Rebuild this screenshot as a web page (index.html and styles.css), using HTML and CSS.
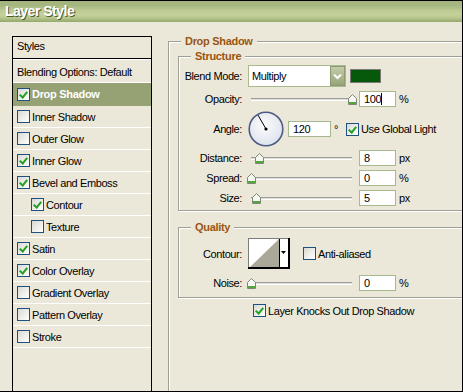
FILE: index.html
```html
<!DOCTYPE html>
<html lang="en">
<head>
  <meta charset="UTF-8" />
  <title>Layer Style</title>
  <link rel="stylesheet" href="styles.css">
</head>
<body>
  <div class="window">
    <div class="titlebar">Layer Style</div>
    <div class="window-body">

      <div class="styles-panel">
        <div class="panel-head">Styles</div>
        <div class="style-item blending">Blending Options: Default</div>
        <div class="style-item selected"><span class="check on"></span>Drop Shadow</div>
        <div class="style-item"><span class="check"></span>Inner Shadow</div>
        <div class="style-item"><span class="check"></span>Outer Glow</div>
        <div class="style-item"><span class="check on"></span>Inner Glow</div>
        <div class="style-item"><span class="check on"></span>Bevel and Emboss</div>
        <div class="style-item sub"><span class="check on"></span>Contour</div>
        <div class="style-item sub"><span class="check"></span>Texture</div>
        <div class="style-item"><span class="check on"></span>Satin</div>
        <div class="style-item"><span class="check on"></span>Color Overlay</div>
        <div class="style-item"><span class="check"></span>Gradient Overlay</div>
        <div class="style-item"><span class="check"></span>Pattern Overlay</div>
        <div class="style-item"><span class="check"></span>Stroke</div>
      </div>

      <div class="settings">
        <fieldset class="group">
          <legend>Drop Shadow</legend>

          <fieldset class="subgroup structure">
            <legend>Structure</legend>

            <div class="row row-blend">
              <span class="label">Blend Mode:</span>
              <div class="select">
                <span>Multiply</span>
                <span class="select-btn">
                  <svg width="13" height="18" viewBox="0 0 13 18"><path d="M3 7.5l3.5 3.5 3.5-3.5" fill="none" stroke="#fff" stroke-width="2"/></svg>
                </span>
              </div>
              <span class="swatch"></span>
            </div>

            <div class="row">
              <span class="label">Opacity:</span>
              <div class="slider"><div class="rail"><span class="thumb" style="left: 100%"><svg width="9" height="11" viewBox="0 0 9 11"><path d="M0.5 4.5L4.5 0.5 8.5 4.5V10.5H0.5Z" fill="#f6f6f2" stroke="#7d8775"/><rect x="1" y="8" width="7" height="2" fill="#52a63c"/></svg></span></div></div>
              <span class="field">100<i class="caret"></i></span>
              <span class="unit">%</span>
            </div>

            <div class="row row-angle">
              <span class="label">Angle:</span>
              <svg class="dial" width="36" height="36" viewBox="0 0 36 36">
                <defs>
                  <radialGradient id="dialFill" cx="45%" cy="40%" r="60%">
                    <stop offset="0" stop-color="#fdfdfd"/>
                    <stop offset="1" stop-color="#dde2ec"/>
                  </radialGradient>
                </defs>
                <circle cx="18" cy="18" r="16.8" fill="url(#dialFill)" stroke="#4e5d86" stroke-width="1.6"/>
                <line x1="18" y1="18" x2="10" y2="4.1" stroke="#000" stroke-width="1"/>
                <circle cx="18" cy="18" r="1.6" fill="#000"/>
              </svg>
              <span class="field field-wide">120</span>
              <span class="unit degree">°</span>
              <span class="check-label"><span class="check on"></span>Use Global Light</span>
            </div>

            <div class="row">
              <span class="label">Distance:</span>
              <div class="slider"><div class="rail"><span class="thumb" style="left: 8%"><svg width="9" height="11" viewBox="0 0 9 11"><path d="M0.5 4.5L4.5 0.5 8.5 4.5V10.5H0.5Z" fill="#f6f6f2" stroke="#7d8775"/><rect x="1" y="8" width="7" height="2" fill="#52a63c"/></svg></span></div></div>
              <span class="field">8</span>
              <span class="unit">px</span>
            </div>

            <div class="row">
              <span class="label">Spread:</span>
              <div class="slider"><div class="rail"><span class="thumb" style="left: 0%"><svg width="9" height="11" viewBox="0 0 9 11"><path d="M0.5 4.5L4.5 0.5 8.5 4.5V10.5H0.5Z" fill="#f6f6f2" stroke="#7d8775"/><rect x="1" y="8" width="7" height="2" fill="#52a63c"/></svg></span></div></div>
              <span class="field">0</span>
              <span class="unit">%</span>
            </div>

            <div class="row">
              <span class="label">Size:</span>
              <div class="slider"><div class="rail"><span class="thumb" style="left: 5%"><svg width="9" height="11" viewBox="0 0 9 11"><path d="M0.5 4.5L4.5 0.5 8.5 4.5V10.5H0.5Z" fill="#f6f6f2" stroke="#7d8775"/><rect x="1" y="8" width="7" height="2" fill="#52a63c"/></svg></span></div></div>
              <span class="field">5</span>
              <span class="unit">px</span>
            </div>
          </fieldset>

          <fieldset class="subgroup quality">
            <legend>Quality</legend>

            <div class="row row-contour">
              <span class="label">Contour:</span>
              <svg class="contour" width="42" height="31" viewBox="0 0 42 31">
                <rect x="0.5" y="0.5" width="41" height="30" fill="#fff" stroke="#7c7c7c"/>
                <path d="M1 30L31 1V30Z" fill="#aca899"/>
                <line x1="31.5" y1="1" x2="31.5" y2="30" stroke="#000"/>
                <path d="M33 13h5l-2.5 3z" fill="#000"/>
                <path d="M41 0V31M0 30H42" stroke="#000" stroke-width="2"/>
              </svg>
              <span class="check-label aa"><span class="check"></span>Anti-aliased</span>
            </div>

            <div class="row row-noise">
              <span class="label">Noise:</span>
              <div class="slider"><div class="rail"><span class="thumb" style="left: 0%"><svg width="9" height="11" viewBox="0 0 9 11"><path d="M0.5 4.5L4.5 0.5 8.5 4.5V10.5H0.5Z" fill="#f6f6f2" stroke="#7d8775"/><rect x="1" y="8" width="7" height="2" fill="#52a63c"/></svg></span></div></div>
              <span class="field">0</span>
              <span class="unit">%</span>
            </div>
          </fieldset>

          <div class="knockout check-label"><span class="check on"></span>Layer Knocks Out Drop Shadow</div>
        </fieldset>
      </div>

    </div>
  </div>
</body>
</html>
```

FILE: styles.css
```css
* {
  box-sizing: border-box;
  margin: 0;
  padding: 0;
}

body {
  font-family: "Liberation Sans", Arial, sans-serif;
  font-size: 11px;
  letter-spacing: -0.4px;
  color: #000;
  background: #ebe8d9;
}

.window {
  width: 463px;
  height: 392px;
  display: flex;
  flex-direction: column;
  border-top: 1px solid #000;
  border-right: 1px solid #000;
  border-bottom: 1px solid #000;
  background: #ebe8d9;
  overflow: hidden;
}

.titlebar {
  flex: none;
  height: 21px;
  padding-left: 5px;
  line-height: 21px;
  font-size: 14px;
  font-weight: bold;
  letter-spacing: -0.5px;
  color: #fff;
  text-shadow: 1px 1px 0 #4b5a33;
  background: linear-gradient(to bottom, #a3b47d 0%, #a7b781 22%, #bccb93 45%, #c4d19a 65%, #b9c78f 80%, #a2b47a 92%, #95aa70 100%);
}

.window-body {
  flex: 1;
  min-height: 0;
  display: flex;
}

/* left list */
.styles-panel {
  flex: none;
  width: 140px;
  margin: 14px 0 0 12px;
  border: 1px solid #000;
  border-bottom: none;
}

.panel-head {
  height: 22px;
  padding: 3px 0 0 4px;
  line-height: 13px;
  border-bottom: 1px solid #000;
}

.style-item {
  height: 22px;
  display: flex;
  align-items: center;
  gap: 2px;
  padding-left: 4px;
  border-bottom: 1px solid #fff;
}

.style-item.blending {
  height: 24px;
  padding-top: 2px;
  box-shadow: inset 0 1px 0 #fff;
}

.style-item.sub {
  padding-left: 18px;
}

.style-item.selected {
  height: 23px;
  background: #96a174;
  border-bottom-color: #96a174;
  color: #fff;
  font-weight: bold;
  letter-spacing: -0.3px;
}

.check {
  flex: none;
  position: relative;
  width: 13px;
  height: 13px;
  border: 1px solid #1c5180;
  background: linear-gradient(135deg, #d9d9d3, #fff);
}

.check.on::after {
  content: "";
  position: absolute;
  left: 3px;
  top: 1px;
  width: 3px;
  height: 6px;
  border: solid #21a121;
  border-width: 0 2px 2px 0;
  transform: rotate(40deg);
}

/* right settings */
.settings {
  flex: 1;
  min-width: 0;
  overflow: hidden;
  padding: 13px 0 0 16px;
}

fieldset {
  border: 1px solid #a09f97;
  box-shadow: inset 1px 1px 0 #fff, 1px 1px 0 #fff;
}

legend {
  padding: 0 4px;
  line-height: 13px;
  font-weight: bold;
  letter-spacing: -0.3px;
  color: #9a5512;
  background: #ebe8d9;
}

.group {
  width: 330px;
  height: 400px;
  padding: 0 0 0 9px;
}

.group > legend {
  margin-left: 3px;
}

.subgroup > legend {
  margin-left: 12px;
}

.structure {
  margin-top: 2px;
  padding: 2px 0 4px;
}

.quality {
  margin-top: 10px;
  padding: 4px 0 6px;
}

.row {
  display: flex;
  align-items: center;
  height: 16px;
  margin-top: 4px;
}

.row-blend {
  height: 22px;
  margin-top: 0;
}

.row-angle {
  height: 36px;
  margin-bottom: -1px;
}

.row-contour {
  height: 31px;
  margin-top: 0;
}

.row-noise {
  margin-top: 6px;
}

.label {
  flex: none;
  width: 63px;
  margin-right: 6px;
  text-align: right;
}

.select {
  flex: none;
  display: flex;
  align-items: center;
  width: 98px;
  height: 22px;
  padding-left: 3px;
  border: 1px solid #a9bb8e;
  background: #fff;
}

.select-btn {
  display: flex;
  margin-left: auto;
  width: 15px;
  height: 20px;
  border: 1px solid #8e9a70;
  background: linear-gradient(#c3cca9, #98a57a);
}

.swatch {
  flex: none;
  width: 31px;
  height: 14px;
  margin-left: 4px;
  border: 1px solid #7a7a7a;
  background: #06590a;
}

.slider {
  flex: none;
  position: relative;
  width: 105px;
  height: 16px;
  margin-right: 6px;
}

.rail {
  position: absolute;
  left: 3px;
  right: 1px;
  top: 7px;
  height: 3px;
  border-top: 1px solid #9c9c9c;
  border-bottom: 1px solid #fff;
  background: #e2e0d6;
}

.thumb {
  position: absolute;
  top: -5px;
  width: 9px;
  height: 11px;
  margin-left: -4px;
  display: flex;
}

.field {
  flex: none;
  display: flex;
  align-items: center;
  width: 37px;
  height: 16px;
  padding-left: 4px;
  border: 1px solid #a6b98e;
  background: #fff;
}

.field-wide {
  width: 43px;
}

.caret {
  width: 1px;
  height: 12px;
  background: #000;
}

.unit {
  margin-left: 3px;
}

.dial {
  flex: none;
  margin-right: 4px;
}

.check-label {
  display: flex;
  align-items: center;
  gap: 2px;
}

.degree + .check-label {
  margin-left: 8px;
}

.contour {
  flex: none;
}

.check-label.aa {
  margin-left: 13px;
}

.knockout {
  margin: 6px 0 0 75px;
}
```
